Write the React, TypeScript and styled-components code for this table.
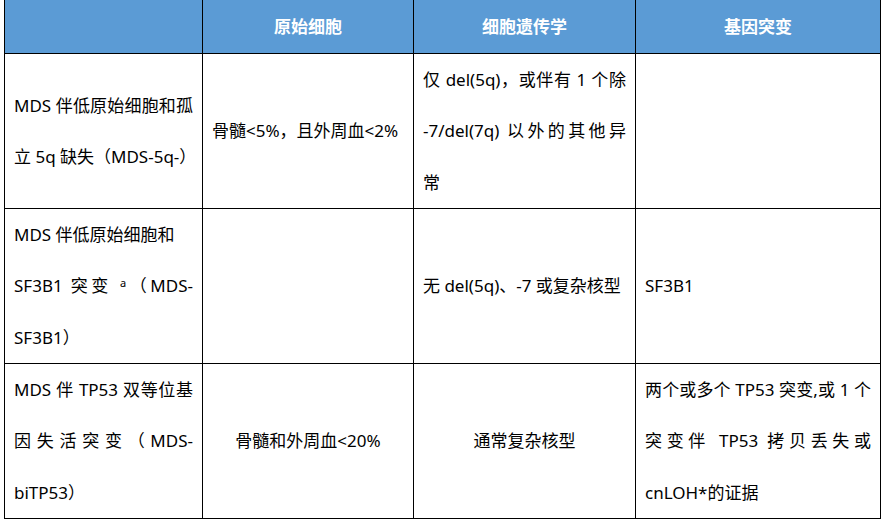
import React from "react";
import styled, { createGlobalStyle } from "styled-components";

const Global = createGlobalStyle`
  html, body { margin: 0; padding: 0; background: #fff; }
  body { font-family: "Noto Sans", "Noto Sans CJK SC", sans-serif; }
`;

const Page = styled.div`
  padding-left: 4px;
  margin-top: -1px;
`;

const Grid = styled.div`
  display: grid;
  width: 877px;
  box-sizing: border-box;
  grid-template-columns: 197px 210px 221px 244px;
  grid-template-rows: 53px 154px 154px 154px;
  gap: 1px;
  padding: 1px;
  background: #000;
`;

const Cell = styled.div<{ $align?: "left" | "center"; $head?: boolean }>`
  background: ${(p) => (p.$head ? "#5B9BD5" : "#fff")};
  color: ${(p) => (p.$head ? "#fff" : "#000")};
  font-weight: ${(p) => (p.$head ? 700 : 400)};
  font-size: 17px;
  line-height: 51.5px;
  padding: 0 9px;
  display: flex;
  flex-direction: column;
  justify-content: center;
  text-align: ${(p) => (p.$align === "center" ? "center" : "left")};
  white-space: nowrap;
  overflow: visible;
  min-width: 0;
`;

const Line = styled.div<{ $justify?: boolean }>`
  text-align: ${(p) => (p.$justify ? "justify" : "inherit")};
  text-align-last: ${(p) => (p.$justify ? "justify" : "auto")};
  text-justify: inter-character;
  white-space: ${(p) => (p.$justify ? "normal" : "nowrap")};
`;

const Sup = styled.span`
  font-size: 11px;
  vertical-align: 5px;
  line-height: 0;
`;

export default function App() {
  return (
    <>
      <Global />
      <Page>
        <Grid>
          <Cell $head />
          <Cell $head $align="center">原始细胞</Cell>
          <Cell $head $align="center">细胞遗传学</Cell>
          <Cell $head $align="center">基因突变</Cell>

          <Cell>
            <Line $justify>MDS 伴低原始细胞和孤</Line>
            <Line>立 5q 缺失（MDS-5q-）</Line>
          </Cell>
          <Cell>
            <Line>骨髓&lt;5%，且外周血&lt;2%</Line>
          </Cell>
          <Cell>
            <Line $justify>仅 del(5q)，或伴有 1 个除</Line>
            <Line $justify>-7/del(7q) 以外的其他异</Line>
            <Line>常</Line>
          </Cell>
          <Cell />

          <Cell>
            <Line>MDS 伴低原始细胞和</Line>
            <Line $justify>
              SF3B1 突变 <Sup>a</Sup>（MDS-
            </Line>
            <Line>SF3B1）</Line>
          </Cell>
          <Cell />
          <Cell>
            <Line>无 del(5q)、-7 或复杂核型</Line>
          </Cell>
          <Cell>
            <Line>SF3B1</Line>
          </Cell>

          <Cell>
            <Line $justify>MDS 伴 TP53 双等位基</Line>
            <Line $justify>因失活突变（MDS-</Line>
            <Line>biTP53）</Line>
          </Cell>
          <Cell $align="center">
            <Line>骨髓和外周血&lt;20%</Line>
          </Cell>
          <Cell $align="center">
            <Line>通常复杂核型</Line>
          </Cell>
          <Cell>
            <Line $justify>两个或多个 TP53 突变,或 1 个</Line>
            <Line $justify>突变伴 TP53 拷贝丢失或</Line>
            <Line>cnLOH*的证据</Line>
          </Cell>
        </Grid>
      </Page>
    </>
  );
}
